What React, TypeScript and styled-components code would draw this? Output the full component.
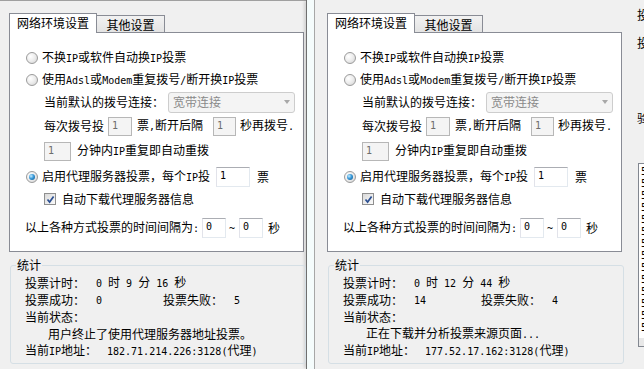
import React from 'react'
import styled, { createGlobalStyle } from 'styled-components'

const GlobalStyle = createGlobalStyle`
  html, body {
    margin: 0;
    padding: 0;
    background: #f0f0f0;
  }
  body {
    font-family: "Noto Sans CJK SC", "Noto Sans", sans-serif;
    font-size: 12px;
    color: #000;
  }
`

const Screen = styled.div`
  display: flex;
  width: 644px;
  height: 369px;
  overflow: hidden;
  background: #f0f0f0;
`

interface PaneProps {
  $width: number
  $left: number
  $topLine?: boolean
}

const Pane = styled.div`
  flex: none;
  box-sizing: border-box;
  ${({ $width, $left, $topLine }: PaneProps) => `
    width: ${$width}px;
    padding: ${$topLine ? 12 : 13}px 0 0 ${$left}px;
    border-top: ${$topLine ? '1px solid #a0a0a0' : 'none'};
  `}
`

const Splitter = styled.div`
  flex: none;
  width: 9px;
  box-sizing: border-box;
  border-left: 1px solid #6f6f6f;
  border-right: 1px solid #a7a7a7;
  background: #f5fcfc;
  box-shadow: -3px 0 3px -1px rgba(0, 0, 0, 0.12);
`

const Mono = styled.span`
  font-family: "DejaVu Sans Mono", "Liberation Mono", monospace;
  font-size: 10px;
  white-space: pre;
`

// wraps the half-width (ascii) runs so they take 6px per char like the dialog font
const Txt: React.FC<{ children: string }> = ({ children }) => (
  <>
    {children
      .split(/([\x20-\x7e]+)/)
      .map((part, i) => (i % 2 === 1 ? <Mono key={i}>{part}</Mono> : part))}
  </>
)

const Dialog = styled.div`
  width: 295px;
`

const TabStrip = styled.div`
  display: flex;
  align-items: flex-end;
  height: 19px;
  position: relative;
  z-index: 1;
`

interface TabProps {
  $active?: boolean
}

const Tab = styled.div`
  box-sizing: border-box;
  display: flex;
  align-items: center;
  justify-content: center;
  line-height: 14px;
  white-space: nowrap;
  border: 1px solid #898c95;
  border-bottom: none;

  ${({ $active }: TabProps) =>
    $active
      ? `
    width: 88px;
    height: 20px;
    margin-bottom: -1px;
    background: #fff;
    padding-bottom: 1px;
  `
      : `
    width: 68px;
    height: 17px;
    border-left: none;
    background: linear-gradient(#f2f2f2, #e3e3e3);
    padding-top: 1px;
  `}
`

const TabPanel = styled.div`
  box-sizing: border-box;
  height: 220px;
  border: 1px solid #898c95;
  background: #fff;
  padding: 14px 0 0 16px;
`

interface RowProps {
  $indent?: number
  $mt?: number
}

const Row = styled.div`
  display: flex;
  align-items: center;
  height: 22px;
  white-space: nowrap;
  ${({ $indent = 0, $mt = 0 }: RowProps) => `
    margin-left: ${$indent}px;
    margin-top: ${$mt}px;
  `}
`

const Label = styled.span`
  line-height: 14px;
  white-space: nowrap;
`

interface RadioProps {
  $checked?: boolean
}

const Radio = styled.span`
  flex: none;
  box-sizing: border-box;
  width: 12px;
  height: 12px;
  margin-right: 4px;
  border-radius: 50%;
  border: 1px solid #9b9b9b;
  background: radial-gradient(circle at 35% 35%, #ffffff 0%, #ececec 50%, #cfcfcf 100%);
  display: flex;
  align-items: center;
  justify-content: center;

  &::after {
    content: '';
    width: 6px;
    height: 6px;
    border-radius: 50%;
    background: radial-gradient(circle at 35% 35%, #c6ecff 0%, #3a9ad9 45%, #0b4f85 100%);
    display: ${({ $checked }: RadioProps) => ($checked ? 'block' : 'none')};
  }
`

const CheckBox = styled.span`
  flex: none;
  box-sizing: border-box;
  width: 12px;
  height: 12px;
  margin-right: 6px;
  border: 1px solid #8f8f8f;
  background: linear-gradient(135deg, #d9d9d9, #fbfbfb);
  display: flex;
  align-items: center;
  justify-content: center;
`

const Combo = styled.div`
  box-sizing: border-box;
  width: 127px;
  height: 21px;
  margin-left: 4px;
  padding-left: 4px;
  border: 1px solid #cdcdcd;
  border-radius: 3px;
  background: #f4f4f4;
  color: #8a8a8a;
  display: flex;
  align-items: center;
  line-height: 14px;
`

const ComboArrow = styled.span`
  margin-left: auto;
  margin-right: 4px;
  width: 0;
  height: 0;
  border-left: 3.5px solid transparent;
  border-right: 3.5px solid transparent;
  border-top: 4px solid #a8a8a8;
`

interface EditProps {
  $w: number
  $h?: number
  $disabled?: boolean
  $ml?: number
  $mr?: number
}

const Edit = styled.div`
  flex: none;
  box-sizing: border-box;
  padding: 2px 0 0 3px;
  font-family: "DejaVu Sans Mono", "Liberation Mono", monospace;
  font-size: 10px;
  line-height: 12px;
  ${({ $w, $h = 20, $disabled, $ml = 0, $mr = 0 }: EditProps) => `
    width: ${$w}px;
    height: ${$h}px;
    margin: 0 ${$mr}px 0 ${$ml}px;
    border: 1px solid;
    border-color: ${$disabled ? '#b7b7b7' : '#abadb3 #e3e9ef #e3e9ef #e2e3ea'};
    background: ${$disabled ? '#f4f4f4' : '#fff'};
    color: ${$disabled ? '#6d6d6d' : '#000'};
  `}
`

const GroupBox = styled.div`
  position: relative;
  box-sizing: border-box;
  width: 296px;
  height: 99px;
  margin: 13px 0 0 1px;
  padding: 8px 0 0 14px;
  border: 1px solid #d5dfe5;
  border-radius: 3px;
`

const Legend = styled.span`
  position: absolute;
  top: -8px;
  left: 5px;
  padding: 0 1px;
  background: #f0f0f0;
  line-height: 14px;
`

const StatLine = styled.div`
  display: flex;
  align-items: center;
  height: 17px;
  white-space: nowrap;
  padding-left: ${({ $indent = 0 }: { $indent?: number }) => $indent}px;
`

const StatCell = styled.span`
  flex: none;
  line-height: 14px;
  ${({ $w }: { $w?: number }) => ($w ? `width: ${$w}px;` : '')}
`

const SidePane = styled.div`
  flex: 1;
  min-width: 0;
  overflow: hidden;
  display: flex;
  flex-direction: column;
  padding: 9px 0 0 1px;
  white-space: nowrap;
`

const SideLabel = styled.div`
  line-height: 12px;
  margin-top: ${({ $mt = 0 }: { $mt?: number }) => $mt}px;
`

const ListBox = styled.div`
  box-sizing: border-box;
  width: 160px;
  height: 184px;
  margin: 39px 0 0 1px;
  border: 1px solid #828790;
  background: #fff;
  display: flex;
  flex-direction: column;
`

const ListItems = styled.div`
  flex: 1;
  overflow: hidden;
  padding: 2px 0 0 2px;
  font-family: "DejaVu Sans Mono", "Liberation Mono", monospace;
  font-size: 10px;
  line-height: 12px;
`

const ListScroll = styled.div`
  height: 8px;
  background: #e8e8e8;
`

interface Stats {
  time: string
  ok: string
  fail: string
  status: string
  ip: string
}

const Check = () => (
  <svg width="9" height="9" viewBox="0 0 9 9">
    <path d="M1.5 4.5 L3.6 7 L7.6 1.5" fill="none" stroke="#2b4f91" strokeWidth="1.7" />
  </svg>
)

const VoteDialog: React.FC<{ stats: Stats }> = ({ stats }) => (
  <Dialog>
    <TabStrip>
      <Tab $active>网络环境设置</Tab>
      <Tab>其他设置</Tab>
    </TabStrip>
    <TabPanel>
      <Row>
        <Radio />
        <Label>
          <Txt>不换IP或软件自动换IP投票</Txt>
        </Label>
      </Row>
      <Row>
        <Radio />
        <Label>
          <Txt>使用Adsl或Modem重复拨号/断开换IP投票</Txt>
        </Label>
      </Row>
      <Row $indent={18}>
        <Label>当前默认的拨号连接：</Label>
        <Combo>
          宽带连接
          <ComboArrow />
        </Combo>
      </Row>
      <Row $indent={18} $mt={2}>
        <Label>每次拨号投</Label>
        <Edit $w={24} $h={19} $disabled $ml={4} $mr={5}>
          1
        </Edit>
        <Label>
          <Txt>票,断开后隔</Txt>
        </Label>
        <Edit $w={23} $h={19} $disabled $ml={10} $mr={4}>
          1
        </Edit>
        <Label>
          <Txt>秒再拨号.</Txt>
        </Label>
      </Row>
      <Row $indent={18} $mt={3}>
        <Edit $w={27} $h={19} $disabled $mr={6}>
          1
        </Edit>
        <Label>
          <Txt>分钟内IP重复即自动重拨</Txt>
        </Label>
      </Row>
      <Row $mt={4}>
        <Radio $checked />
        <Label>
          <Txt>启用代理服务器投票，每个IP投</Txt>
        </Label>
        <Edit $w={34} $ml={6} $mr={7}>
          1
        </Edit>
        <Label>票</Label>
      </Row>
      <Row $indent={18}>
        <CheckBox>
          <Check />
        </CheckBox>
        <Label>自动下载代理服务器信息</Label>
      </Row>
      <Row $indent={-1} $mt={7}>
        <Label>
          <Txt>以上各种方式投票的时间间隔为:</Txt>
        </Label>
        <Edit $w={24} $ml={3} $mr={3}>
          0
        </Edit>
        <Label>
          <Mono>~</Mono>
        </Label>
        <Edit $w={24} $ml={4} $mr={5}>
          0
        </Edit>
        <Label>秒</Label>
      </Row>
    </TabPanel>

    <GroupBox>
      <Legend>统计</Legend>
      <StatLine>
        <StatCell $w={71}>投票计时：</StatCell>
        <StatCell>
          <Txt>{stats.time}</Txt>
        </StatCell>
      </StatLine>
      <StatLine>
        <StatCell $w={71}>投票成功：</StatCell>
        <StatCell $w={67}>
          <Mono>{stats.ok}</Mono>
        </StatCell>
        <StatCell $w={71}>投票失败：</StatCell>
        <StatCell>
          <Mono>{stats.fail}</Mono>
        </StatCell>
      </StatLine>
      <StatLine>
        <StatCell>当前状态：</StatCell>
      </StatLine>
      <StatLine $indent={23}>
        <StatCell>
          <Txt>{stats.status}</Txt>
        </StatCell>
      </StatLine>
      <StatLine>
        <StatCell $w={82}>
          <Txt>当前IP地址：</Txt>
        </StatCell>
        <StatCell>
          <Txt>{stats.ip}</Txt>
        </StatCell>
      </StatLine>
    </GroupBox>
  </Dialog>
)

const leftStats: Stats = {
  time: '0 时 9 分 16 秒',
  ok: '0',
  fail: '5',
  status: '用户终止了使用代理服务器地址投票。',
  ip: '182.71.214.226:3128(代理)',
}

const rightStats: Stats = {
  time: '0 时 12 分 44 秒',
  ok: '14',
  fail: '4',
  status: '正在下载并分析投票来源页面...',
  ip: '177.52.17.162:3128(代理)',
}

const proxyList = [
  '58.20.41.172:8080',
  '59.108.116.175:3128',
  '58.67.147.205:8080',
  '59.37.160.18:8080',
  '58.22.79.3:3128',
  '59.172.208.186:8080',
  '58.83.224.217:80',
  '59.39.67.158:8080',
  '58.61.155.98:3128',
  '59.47.42.71:8080',
  '58.214.240.70:3128',
  '59.64.130.3:8080',
  '58.56.87.2:80',
  '59.41.23.114:3128',
]

export default function App() {
  return (
    <>
      <GlobalStyle />
      <Screen>
        <Pane $width={306} $left={9} $topLine>
          <VoteDialog stats={leftStats} />
        </Pane>
        <Splitter />
        <Pane $width={321} $left={12}>
          <VoteDialog stats={rightStats} />
        </Pane>
        <SidePane>
          <SideLabel>投票地址：</SideLabel>
          <SideLabel $mt={16}>投票数量：</SideLabel>
          <SideLabel $mt={63}>验证码：</SideLabel>
          <ListBox>
            <ListItems>
              {proxyList.map((ip) => (
                <div key={ip}>{ip}</div>
              ))}
            </ListItems>
            <ListScroll />
          </ListBox>
        </SidePane>
      </Screen>
    </>
  )
}
